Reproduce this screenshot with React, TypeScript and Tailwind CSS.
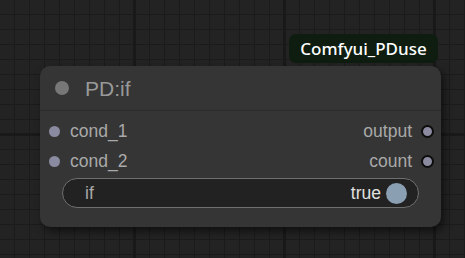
import React from "react";

function Grid() {
  const minor: number[] = [];
  for (let v = -1; v < 480; v += 15) minor.push(v);
  return (
    <svg className="absolute inset-0" width={465} height={258}>
      <rect width={465} height={258} fill="#232323" />
      {minor.map((v) => (
        <g key={v}>
          <rect x={v} y={0} width={1} height={258} fill="#1b1b1b" />
          <rect x={0} y={v} width={465} height={1} fill="#1b1b1b" />
        </g>
      ))}
      {[134, 284, 434].map((v) => (
        <rect key={v} x={v - 1} y={0} width={3} height={258} fill="#191919" />
      ))}
      <rect x={0} y={133} width={465} height={3} fill="#191919" />
    </svg>
  );
}

function InputSlot({ label }: { label: string }) {
  return (
    <div className="flex items-center h-[30px] pl-[9px]">
      <span className="w-[11px] h-[11px] rounded-full bg-[#8a8aa0]" />
      <span className="ml-[10px] mt-[1px] text-[17.5px] text-[#a9a9a9]">{label}</span>
    </div>
  );
}

function OutputSlot({ label }: { label: string }) {
  return (
    <div className="flex items-center h-[30px] pr-[7px]">
      <span className="mt-[1px] text-[17.5px] text-[#a9a9a9]">{label}</span>
      <span className="ml-[9px] w-[13px] h-[13px] rounded-full bg-[#8a8aa0] border-2 border-[#0d0d0d]" />
    </div>
  );
}

export default function App() {
  return (
    <div
      className="relative w-[465px] h-[258px] overflow-hidden"
      style={{ fontFamily: '"Liberation Sans", Arial, sans-serif' }}
    >
      <Grid />

      <div
        className="absolute left-[289px] top-[34px] w-[149px] h-[29px] rounded-[7px] bg-[#0e1d0f] flex items-center justify-center text-white text-[17px] font-medium"
        style={{ fontFamily: '"Noto Sans", "Open Sans", sans-serif' }}
      >
        Comfyui_PDuse
      </div>

      <div className="absolute left-[40px] top-[66px] w-[401px] h-[161px] rounded-[10px] bg-[#353535] shadow-[3px_4px_8px_rgba(0,0,0,0.55)] flex flex-col">
        <div className="h-[45px] flex items-center pl-[15px] border-b border-[#2b2b2b] shrink-0">
          <span className="w-[14px] h-[14px] rounded-full bg-[#777]" />
          <span className="ml-[16px] mt-[1px] text-[21px] text-[#999]">PD:if</span>
        </div>

        <div className="flex justify-between pt-[5px]">
          <div className="flex flex-col">
            <InputSlot label="cond_1" />
            <InputSlot label="cond_2" />
          </div>
          <div className="flex flex-col items-end">
            <OutputSlot label="output" />
            <OutputSlot label="count" />
          </div>
        </div>

        <div className="mt-[2px] ml-[22px] w-[357px] h-[30px] rounded-full bg-[#222] border border-[#6f6f6f] flex items-center pl-[22px] pr-[11px]">
          <span className="text-[17.5px] text-[#a9a9a9]">if</span>
          <span className="ml-auto text-[17.5px] text-[#e0e0e0]">true</span>
          <span className="ml-[5px] w-[21px] h-[21px] rounded-full bg-[#8b9fb2]" />
        </div>
      </div>
    </div>
  );
}
